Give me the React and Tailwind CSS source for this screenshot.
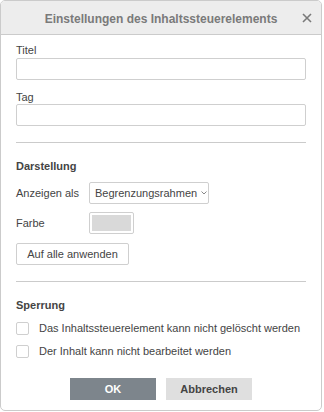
import React from "react";

export default function App() {
  return (
    <div className="w-[324px] h-[412px] bg-white" style={{ fontFamily: '"Liberation Sans", Arial, sans-serif' }}>
      <div className="w-[322px] h-[411px] border border-[#cbcbcb] rounded-[5px] overflow-hidden flex flex-col">
        <div className="h-[34px] shrink-0 bg-[#ededed] border-b border-[#cbcbcb] flex items-center relative">
          <div className="w-full text-center text-[12px] font-bold text-[#7a7a7a] pt-[2px]">Einstellungen des Inhaltssteuerelements</div>
          <svg className="absolute left-[301px] top-[12px]" width="10" height="10" viewBox="0 0 10 10">
            <path d="M1 1 L9 9 M9 1 L1 9" stroke="#7a7a7a" strokeWidth="1.6" />
          </svg>
        </div>
        <div className="flex-1 pl-[15px] pr-[15px] text-[11px] text-[#444]">
          <div className="pt-[8px] leading-[14px]">Titel</div>
          <div className="mt-[1px] h-[22px] border border-[#cfcfcf] rounded-[2px]" />
          <div className="mt-[10px] leading-[14px]">Tag</div>
          <div className="h-[22px] border border-[#cfcfcf] rounded-[2px]" />
          <div className="mt-[16px] border-t border-[#cbcbcb]" />
          <div className="mt-[16px] leading-[14px] font-bold">Darstellung</div>
          <div className="mt-[9px] flex items-center">
            <div className="w-[73px]">Anzeigen als</div>
            <div className="h-[22px] w-[120px] border border-[#cfcfcf] rounded-[2px] flex items-center pl-[5px]">
              <span>Begrenzungsrahmen</span>
              <svg className="ml-[4px]" width="6" height="4" viewBox="0 0 6 4">
                <path d="M0.5 0.5 L3 3 L5.5 0.5" stroke="#888" fill="none" strokeWidth="1" />
              </svg>
            </div>
          </div>
          <div className="mt-[8px] flex items-center">
            <div className="w-[73px]">Farbe</div>
            <div className="h-[22px] w-[45px] border border-[#cfcfcf] rounded-[2px] p-[2px]">
              <div className="w-full h-full bg-[#d9d9d9]" />
            </div>
          </div>
          <div className="mt-[9px] h-[22px] w-[113px] border border-[#cfcfcf] rounded-[2px] flex items-center justify-center">Auf alle anwenden</div>
          <div className="mt-[16px] border-t border-[#cbcbcb]" />
          <div className="mt-[16px] leading-[14px] font-bold">Sperrung</div>
          <div className="mt-[10px] h-[13px] leading-[13px] flex items-center">
            <div className="w-[13px] h-[13px] border border-[#cfcfcf] rounded-[2px]" />
            <span className="ml-[10px]">Das Inhaltssteuerelement kann nicht gelöscht werden</span>
          </div>
          <div className="mt-[10px] h-[13px] leading-[13px] flex items-center">
            <div className="w-[13px] h-[13px] border border-[#cfcfcf] rounded-[2px]" />
            <span className="ml-[10px]">Der Inhalt kann nicht bearbeitet werden</span>
          </div>
          <div className="mt-[20px] flex justify-center gap-[10px]">
            <button className="w-[86px] h-[22px] bg-[#7d858c] text-white font-bold text-[11px]">OK</button>
            <button className="w-[86px] h-[22px] bg-[#dfdfdf] text-[#444] font-bold text-[11px]">Abbrechen</button>
          </div>
        </div>
      </div>
    </div>
  );
}
